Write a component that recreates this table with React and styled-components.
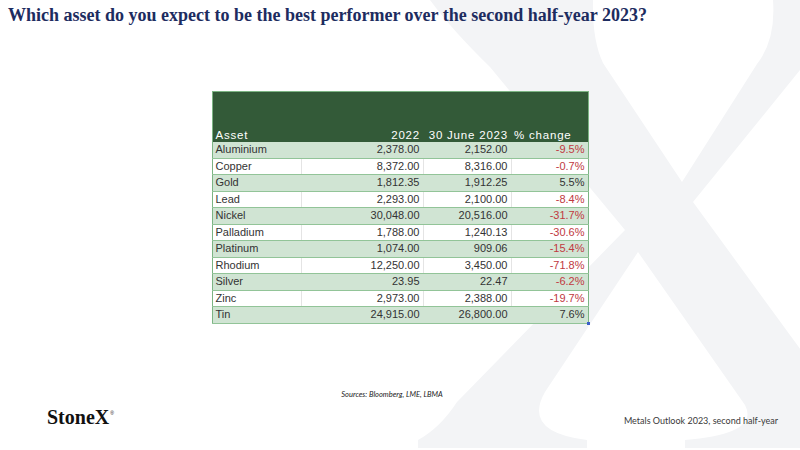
import React from "react";
import styled, { createGlobalStyle } from "styled-components";

const Global = createGlobalStyle`
  html, body { margin: 0; padding: 0; background: #ffffff; }
  #root { width: 800px; height: 450px; }
`;

const Page = styled.div`
  position: relative;
  width: 800px;
  height: 450px;
  overflow: hidden;
  background: #ffffff;
  display: flex;
  flex-direction: column;
`;

const Watermark = styled.svg`
  position: absolute;
  left: 0;
  top: 0;
  width: 800px;
  height: 450px;
  z-index: 0;
  pointer-events: none;
`;

const Content = styled.div`
  position: relative;
  z-index: 1;
  display: flex;
  flex-direction: column;
  height: 100%;
`;

const Title = styled.h1`
  margin: 0;
  padding: 5px 0 0 8px;
  font-family: "Liberation Serif", "Times New Roman", serif;
  font-weight: 700;
  font-size: 18px;
  line-height: 21px;
  color: #1d2c60;
`;

const TableArea = styled.div`
  display: flex;
  justify-content: center;
  margin-top: 65px;
`;

const Table = styled.table`
  border-collapse: collapse;
  width: 376px;
  table-layout: fixed;
  font-family: "Liberation Sans", Arial, sans-serif;
  font-size: 11px;
  border-left: 1px solid #7cb483;
  border-right: 1px solid #7cb483;
  border-bottom: 1px solid #7cb483;
`;

const HeadRow = styled.tr`
  height: 50px;
  background: #335a38;
`;

const HeadCell = styled.th`
  color: #ffffff;
  font-weight: 400;
  font-size: 11.5px;
  letter-spacing: 0.8px;
  vertical-align: bottom;
  padding: 0 3px 1px 3px;
  text-align: ${(p) => p.$align || "right"};
  border-top: 1px solid #7cb483;
  white-space: nowrap;
`;

const Row = styled.tr`
  height: 16.5px;
  background: ${(p) => (p.$alt ? "#d0e4d3" : "#ffffff")};
`;

const Cell = styled.td`
  padding: 0 3px;
  line-height: 15px;
  text-align: ${(p) => p.$align || "right"};
  color: ${(p) => (p.$neg ? "#c0393f" : "#333333")};
  border-bottom: 1px solid #92c498;
  border-right: ${(p) => (p.$last ? "none" : p.$alt ? "1px solid #d0e4d3" : "1px solid #e4e4e4")};
  white-space: nowrap;
  position: relative;
`;

const Handle = styled.span`
  position: absolute;
  right: -2px;
  bottom: -2px;
  width: 3px;
  height: 3px;
  background: #3b5fc9;
`;

const Footer = styled.div`
  margin-top: auto;
  padding-bottom: 22px;
  display: flex;
  flex-direction: column;
`;

const Sources = styled.p`
  margin: 0;
  padding-right: 16px;
  text-align: center;
  font-family: Lato, "Liberation Sans", sans-serif;
  font-style: italic;
  font-size: 7.5px;
  line-height: 10px;
  color: #222222;
`;

const BottomBar = styled.div`
  display: flex;
  justify-content: space-between;
  align-items: flex-end;
  padding: 0 22px 0 47px;
  margin-top: 6px;
`;

const Logo = styled.div`
  font-family: "Liberation Serif", "Times New Roman", serif;
  font-weight: 700;
  font-size: 20px;
  line-height: 22px;
  color: #111111;
  display: flex;
  align-items: flex-start;
`;

const Reg = styled.span`
  font-family: "Liberation Sans", sans-serif;
  font-weight: 400;
  font-size: 5px;
  line-height: 5px;
  margin-top: 5px;
  margin-left: 1px;
`;

const Outlook = styled.div`
  font-family: Lato, "Liberation Sans", sans-serif;
  font-size: 9px;
  line-height: 12px;
  color: #3a3a3a;
  margin-bottom: 1px;
`;

const rows = [
  ["Aluminium", "2,378.00", "2,152.00", "-9.5%"],
  ["Copper", "8,372.00", "8,316.00", "-0.7%"],
  ["Gold", "1,812.35", "1,912.25", "5.5%"],
  ["Lead", "2,293.00", "2,100.00", "-8.4%"],
  ["Nickel", "30,048.00", "20,516.00", "-31.7%"],
  ["Palladium", "1,788.00", "1,240.13", "-30.6%"],
  ["Platinum", "1,074.00", "909.06", "-15.4%"],
  ["Rhodium", "12,250.00", "3,450.00", "-71.8%"],
  ["Silver", "23.95", "22.47", "-6.2%"],
  ["Zinc", "2,973.00", "2,388.00", "-19.7%"],
  ["Tin", "24,915.00", "26,800.00", "7.6%"],
];

const XMark = () => (
  <Watermark viewBox="0 0 800 450">
    <path
      fill="#f3f4f6"
      d="M428 -5 L430 0 Q452 30 490 67 L625 230 L457 402 Q440 428 418 440 L418 448 L587 448 L587 440 Q522 432 545 392 L638 252 L745 405 Q760 434 685 440 L685 448 L810 448 L810 362 L806 357 L693 202 L800 70 L810 70 L810 -5 L773 -5 L773 0 Q776 40 757 64 L682 182 L603 63 Q592 40 593 0 L593 -5 Z"
    />
  </Watermark>
);

export default function App() {
  return (
    <>
      <Global />
      <Page>
        <XMark />
        <Content>
          <Title>Which asset do you expect to be the best performer over the second half-year 2023?</Title>
          <TableArea>
            <Table>
              <colgroup>
                <col style={{ width: "89px" }} />
                <col style={{ width: "122px" }} />
                <col style={{ width: "88px" }} />
                <col style={{ width: "77px" }} />
              </colgroup>
              <thead>
                <HeadRow>
                  <HeadCell $align="left">Asset</HeadCell>
                  <HeadCell>2022</HeadCell>
                  <HeadCell>30 June 2023</HeadCell>
                  <HeadCell $align="left">% change</HeadCell>
                </HeadRow>
              </thead>
              <tbody>
                {rows.map((r, i) => {
                  const alt = i % 2 === 0;
                  const isLast = i === rows.length - 1;
                  return (
                    <Row key={r[0]} $alt={alt}>
                      <Cell $align="left" $alt={alt}>{r[0]}</Cell>
                      <Cell $alt={alt}>{r[1]}</Cell>
                      <Cell $alt={alt}>{r[2]}</Cell>
                      <Cell $alt={alt} $last $neg={r[3].startsWith("-")}>
                        {r[3]}
                        {isLast && <Handle />}
                      </Cell>
                    </Row>
                  );
                })}
              </tbody>
            </Table>
          </TableArea>
          <Footer>
            <Sources>Sources: Bloomberg, LME, LBMA</Sources>
            <BottomBar>
              <Logo>
                StoneX<Reg>®</Reg>
              </Logo>
              <Outlook>Metals Outlook 2023, second half-year</Outlook>
            </BottomBar>
          </Footer>
        </Content>
      </Page>
    </>
  );
}
